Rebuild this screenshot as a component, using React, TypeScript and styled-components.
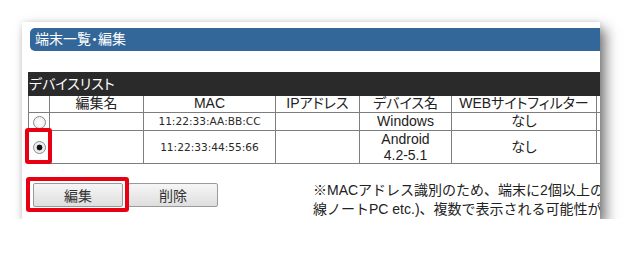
import styled, { createGlobalStyle } from 'styled-components'

const GlobalStyle = createGlobalStyle`
body {
  margin: 0;
  background: #ffffff;
  font-family: "Liberation Sans", "Noto Sans CJK JP", sans-serif;
  font-feature-settings: "palt";
  color: #222;
}
`

interface iDevice {
  mac: string,
  name: string[],
  filter: string,
  checked?: boolean
}

const devices: iDevice[] = [
  { mac: '11:22:33:AA:BB:CC', name: ['Windows'], filter: 'なし' },
  { mac: '11:22:33:44:55:66', name: ['Android', '4.2-5.1'], filter: 'なし', checked: true },
]

const App = () => {
  return (
    <Page>
      <GlobalStyle />
      <Card>
        <TitleBar>端末一覧・編集</TitleBar>
        <ListTitle>デバイスリスト</ListTitle>
        <Table>
          <colgroup>
            <col style={{ width: 21 }} />
            <col style={{ width: 94 }} />
            <col style={{ width: 132 }} />
            <col style={{ width: 84 }} />
            <col style={{ width: 92 }} />
            <col style={{ width: 145 }} />
            <col style={{ width: 112 }} />
          </colgroup>
          <thead>
            <HeadRow>
              <Th></Th>
              <Th>編集名</Th>
              <Th>MAC</Th>
              <Th>IPアドレス</Th>
              <Th>デバイス名</Th>
              <Th>WEBサイトフィルター</Th>
              <Th></Th>
            </HeadRow>
          </thead>
          <tbody>
            {devices.map((d) => (
              <Row key={d.mac} tall={d.name.length > 1}>
                <RadioCell>
                  <Radio checked={!!d.checked} />
                  {d.checked ? <RadioMark /> : null}
                </RadioCell>
                <Td></Td>
                <MacCell>{d.mac}</MacCell>
                <Td></Td>
                <Td>
                  {d.name.map((n) => (
                    <Line key={n}>{n}</Line>
                  ))}
                </Td>
                <Td>{d.filter}</Td>
                <Td></Td>
              </Row>
            ))}
          </tbody>
        </Table>
        <Actions>
          <ButtonWrap>
            <Button>編集</Button>
            <ButtonMark />
          </ButtonWrap>
          <Button>削除</Button>
          <Note>
            <Line>※MACアドレス識別のため、端末に2個以上のネットワークアダプタがある場合（有</Line>
            <Line>線ノートPC etc.)、複数で表示される可能性があります。</Line>
          </Note>
        </Actions>
      </Card>
    </Page>
  )
}

export default App

const Page = styled.div`
padding: 22px 0 0 22px;
`

const Card = styled.div`
position: relative;
width: 578px;
height: 197px;
box-sizing: border-box;
padding: 6px 0 0 6px;
background-color: #ffffff;
box-shadow: 6px 7px 12px rgba(0, 0, 0, 0.5), 0 0 6px rgba(0, 0, 0, 0.12);
overflow: hidden;
`

const TitleBar = styled.div`
margin-left: 2px;
width: 620px;
height: 23px;
line-height: 23px;
padding-left: 5px;
background-color: #336699;
color: #ffffff;
font-size: 14px;
border-radius: 5px 0 0 5px;
`

const ListTitle = styled.div`
margin-top: 21px;
width: 680px;
height: 24px;
line-height: 24px;
padding-left: 1px;
box-sizing: border-box;
background-color: #2a2a2a;
color: #ffffff;
font-size: 14px;
`

const Table = styled.table`
width: 680px;
border-collapse: collapse;
table-layout: fixed;
font-size: 14px;
`

const HeadRow = styled.tr`
height: 16px;
`

const Row = styled.tr<{ tall: boolean }>`
height: ${({ tall }) => (tall ? '33px' : '18px')};
`

const Th = styled.th`
padding: 0;
border: 1px solid #7d7d7d;
border-top: none;
font-weight: normal;
line-height: 15px;
text-align: center;
white-space: nowrap;
`

const Td = styled.td`
padding: 0;
border: 1px solid #7d7d7d;
line-height: 16px;
text-align: center;
vertical-align: middle;
white-space: nowrap;
`

const RadioCell = styled(Td)`
position: relative;
`

const MacCell = styled(Td)`
font-family: "DejaVu Sans", sans-serif;
font-size: 10.6px;
color: #2a2a2a;
`

const Line = styled.div``

const Radio = styled.span<{ checked: boolean }>`
display: inline-block;
vertical-align: middle;
width: 11px;
height: 11px;
border: 1px solid #8c8c8c;
border-radius: 50%;
background: ${({ checked }) =>
  checked
    ? 'radial-gradient(circle, #111 0, #111 2.6px, #e8e8e8 3.2px, #f7f7f7 100%)'
    : 'radial-gradient(circle, #ffffff 0, #f2f2f2 60%, #dcdcdc 100%)'};
`

const RadioMark = styled.span`
position: absolute;
left: -4px;
top: -3px;
width: 27px;
height: 36px;
box-sizing: border-box;
border: 4px solid #e60012;
border-radius: 3px;
`

const Actions = styled.div`
display: flex;
align-items: flex-start;
margin-top: 19px;
padding-left: 5px;
`

const ButtonWrap = styled.div`
position: relative;
flex-shrink: 0;
margin-right: 5px;
`

const Button = styled.button`
flex-shrink: 0;
width: 90px;
height: 24px;
padding: 0;
border: 1px solid #9a9a9a;
border-radius: 2px;
background: linear-gradient(#f6f6f6, #dedede);
color: #333;
font-family: "Liberation Sans", "Noto Sans CJK JP", sans-serif;
font-size: 14px;
`

const ButtonMark = styled.span`
position: absolute;
left: -7px;
top: -6px;
width: 103px;
height: 35px;
box-sizing: border-box;
border: 4px solid #e60012;
border-radius: 3px;
`

const Note = styled.div`
flex-shrink: 0;
margin-left: 95px;
margin-top: -2px;
font-size: 14px;
font-feature-settings: normal;
line-height: 19px;
white-space: nowrap;
color: #222;
`
